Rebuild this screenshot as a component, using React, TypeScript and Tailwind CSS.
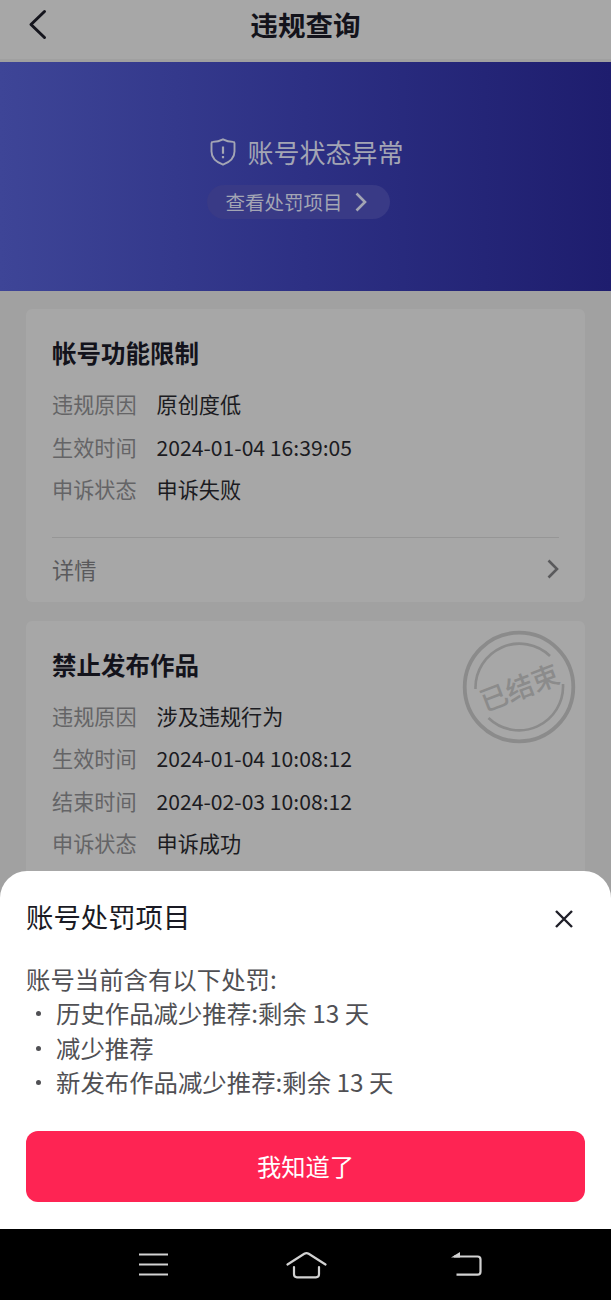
import { useState } from "react";

type Row = { label: string; value: string };

type Violation = {
  title: string;
  rows: Row[];
  ended?: boolean;
};

const violations: Violation[] = [
  {
    title: "帐号功能限制",
    rows: [
      { label: "违规原因", value: "原创度低" },
      { label: "生效时间", value: "2024-01-04 16:39:05" },
      { label: "申诉状态", value: "申诉失败" },
    ],
  },
  {
    title: "禁止发布作品",
    ended: true,
    rows: [
      { label: "违规原因", value: "涉及违规行为" },
      { label: "生效时间", value: "2024-01-04 10:08:12" },
      { label: "结束时间", value: "2024-02-03 10:08:12" },
      { label: "申诉状态", value: "申诉成功" },
    ],
  },
];

const penalties = ["历史作品减少推荐:剩余 13 天", "减少推荐", "新发布作品减少推荐:剩余 13 天"];

const Chevron = ({ className }: { className: string }) => (
  <svg viewBox="0 0 12 20" fill="none" className={className}>
    <path d="M1.5 1.5 10 10l-8.5 8.5" stroke="currentColor" strokeWidth="2.6" />
  </svg>
);

const Header = () => (
  <header className="relative flex h-[62px] items-start justify-center border-b-[3px] border-[#a0a0a0] bg-[#a7a7a7]">
    <button className="absolute left-[28px] top-[9px]" aria-label="返回">
      <svg width="20" height="32" viewBox="0 0 20 32" fill="none">
        <path
          d="M16.500 2.500 3 15.500l13.500 13"
          stroke="#15151d"
          strokeWidth="3"
          strokeLinecap="round"
          strokeLinejoin="round"
        />
      </svg>
    </button>
    <h1 className="text-[27.6px] font-bold leading-[48px] text-[#13131b]">违规查询</h1>
  </header>
);

const Banner = () => (
  <section className="flex h-[229px] flex-col items-center bg-linear-to-r from-[#3e4597] via-[#2d3084] to-[#1e1d6e] pt-[70px]">
    <div className="ml-[3px] flex h-10 items-center gap-[11px] text-[#a3a5b4]">
      <svg width="26" height="28" viewBox="0 0 26 28" fill="none" stroke="currentColor">
        <path
          d="M13 1.3c3 1.6 6.600 2.500 10.200 2.600.8 0 1.300.5 1.300 1.300v8.300c0 6.300-4.500 10.500-11.500 13.200C6 24 1.500 19.800 1.500 13.500V5.200c0-.8.5-1.300 1.300-1.300C6.400 3.800 10 2.900 13 1.300Z"
          strokeWidth="1.900"
        />
        <path d="M13 8.500v7.200M13 18v2.300" strokeWidth="2.200" />
      </svg>
      <span className="text-[26px] leading-10">账号状态异常</span>
    </div>
    <button className="mr-[15px] mt-[13px] flex h-[34px] w-[183px] items-center gap-3 rounded-full bg-[#393a86] pl-[19px] text-[#a3a5b4]">
      <span className="text-[19.5px]">查看处罚项目</span>
      <Chevron className="h-5 w-3" />
    </button>
  </section>
);

// Round "ended" seal in the card corner
const Stamp = () => (
  <div className="absolute right-[9px] top-[9px] flex size-[114px] items-center justify-center text-[#8b8b8b]">
    <svg viewBox="0 0 114 114" fill="none" stroke="currentColor" className="absolute inset-0">
      <circle cx="57" cy="57" r="54.300" strokeWidth="3.800" />
      <path d="M13.500 59A44 44 0 0 1 88 26" strokeWidth="2.600" />
      <path d="M101 54A44 44 0 0 1 26.500 88" strokeWidth="2.600" />
    </svg>
    <span className="-rotate-[21deg] whitespace-nowrap text-[27.5px] font-medium leading-none">已结束</span>
  </div>
);

const ViolationCard = ({ item }: { item: Violation }) => (
  <article className="relative rounded-md bg-[#a7a7a7] px-[26px] pt-[24px]">
    {item.ended && <Stamp />}
    <h2 className="text-[24.5px] font-bold leading-10 text-[#13131b]">{item.title}</h2>
    <dl className="mt-[10px]">
      {item.rows.map((row) => (
        <div key={row.label} className="flex h-[42.5px] items-center gap-5 text-[21.15px]">
          <dt className="text-[#646466]">{row.label}</dt>
          <dd className="text-[#1b1b21]">{row.value}</dd>
        </div>
      ))}
    </dl>
    {item.ended ? (
      <div className="h-[65px]" />
    ) : (
      <div className="mt-[26px] flex h-[65px] items-center justify-between border-t-[1.5px] border-[#969696] text-[22.2px] text-[#5a5a5c]">
        <span>详情</span>
        <Chevron className="mb-[2px] h-5 w-3" />
      </div>
    )}
  </article>
);

const PenaltySheet = ({ onClose }: { onClose: () => void }) => (
  <div className="absolute inset-x-0 bottom-[71px] h-[358px] rounded-t-[27px] bg-white px-[26px] pt-[26px]">
    <div className="flex h-10 items-center justify-between">
      <h2 className="text-[27.4px] text-[#1a1a24]">账号处罚项目</h2>
      <button className="mr-[12px] mt-[3px]" onClick={onClose} aria-label="关闭">
        <svg width="18" height="18" viewBox="0 0 18 18" fill="none">
          <path d="m1 1 16 16M17 1 1 17" stroke="#1f1f28" strokeWidth="2.400" />
        </svg>
      </button>
    </div>
    <div className="mt-[25px] text-[24.4px] leading-[34.4px] text-[#505054]">
      <p>账号当前含有以下处罚:</p>
      <ul>
        {penalties.map((text) => (
          <li key={text} className="flex items-center">
            <span className="ml-[10px] mr-[15px] size-[5px] rounded-full bg-[#505054]" />
            {text}
          </li>
        ))}
      </ul>
    </div>
    <button
      className="mt-[31px] h-[71px] w-full rounded-xl bg-[#fe2453] text-[24.3px] text-white"
      onClick={onClose}
    >
      我知道了
    </button>
  </div>
);

const NavBar = () => (
  <nav className="absolute inset-x-0 bottom-0 flex h-[71px] items-center bg-black pl-[138px] text-[#d2d2d2]">
    <svg width="31" height="26" viewBox="0 0 31 26" stroke="currentColor" strokeWidth="2.200">
      <path d="M1 2.500h29M1 12.500h29M1 22.500h29" />
    </svg>
    <svg
      width="41"
      height="28"
      viewBox="0 0 41 28"
      fill="none"
      stroke="currentColor"
      strokeWidth="2.200"
      strokeLinecap="round"
      className="ml-[117px]"
    >
      <path d="M1.500 13.500 18.300 2.800q2.200-1.400 4.400 0L39.500 13.500" />
      <path d="M8 16v7.300q0 3 3 3h19q3 0 3-3V16" />
    </svg>
    <svg
      width="31"
      height="26"
      viewBox="0 0 31 26"
      fill="none"
      stroke="currentColor"
      strokeWidth="2.200"
      className="ml-[124px]"
    >
      <path d="M3 4.500h23.500q3 0 3 3v12.200q0 3-3 3H5.500" />
      <path d="M0 5.600 9 0v5.600Z" fill="currentColor" stroke="none" />
    </svg>
  </nav>
);

export default function App() {
  const [open, setOpen] = useState(true);

  return (
    <div className="relative h-[1300px] w-[611px] overflow-hidden bg-[#a1a1a1] font-['Noto_Sans_CJK_SC',sans-serif]">
      <Header />
      <Banner />
      <main className="flex flex-col gap-[19px] px-[26px] pt-[18px]">
        {violations.map((item) => (
          <ViolationCard key={item.title} item={item} />
        ))}
      </main>
      {open && <PenaltySheet onClose={() => setOpen(false)} />}
      <NavBar />
    </div>
  );
}
